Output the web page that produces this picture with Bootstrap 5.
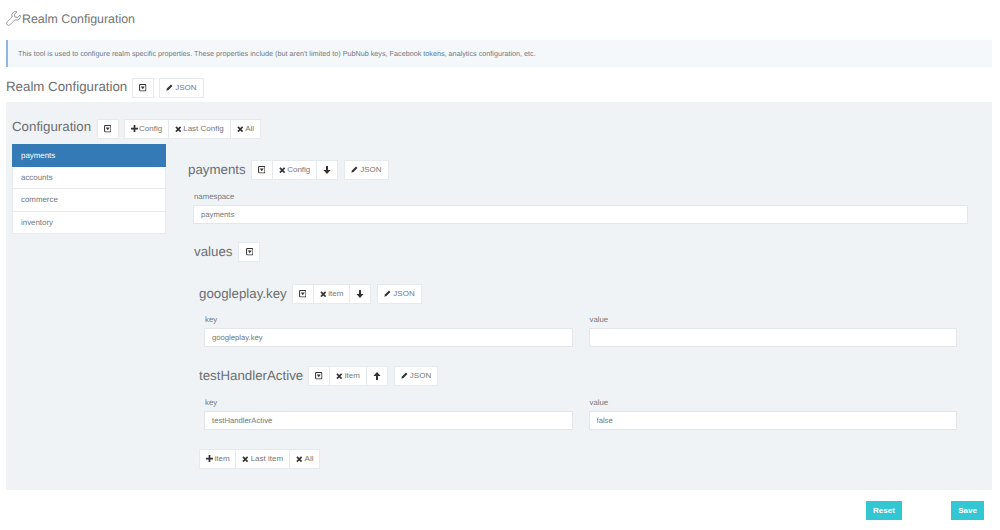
<!DOCTYPE html>
<html lang="en">
<head>
<meta charset="utf-8">
<title>Realm Configuration</title>
<link href="https://cdn.jsdelivr.net/npm/bootstrap@5.3.0/dist/css/bootstrap.min.css" rel="stylesheet">
<style>
html,body{height:530px;overflow:hidden;background:#fff}
body{font-family:"Liberation Sans",Arial,sans-serif;font-size:8px;color:#676a6c;padding:0 8px 0 6px;text-rendering:geometricPrecision}
.page-title{font-size:12.4px;font-weight:400;color:#707375;margin:0;height:40px;padding-bottom:3px;line-height:16px;display:flex;align-items:center;gap:1px}
.page-title svg{width:15px;height:15px}
.info-box{background:#f4f8fb;border-left:2px solid #8db7e3;height:27px;padding:0 10px;line-height:27px;font-size:7.23px;color:#74797e;border-radius:0}
.info-box a{color:#4f7fa8;text-decoration:none}
.head-row{display:flex;align-items:center;gap:5px}
.head-row.top{height:35px;padding-top:11px;align-items:flex-start}
.htext{font-weight:400;color:#6c6f71;margin:0;line-height:19.5px}
.h-lg{font-size:13.3px;line-height:17px}
.h-cfg{font-size:13.3px;line-height:14px;margin:0 .5px 3px 0}
.h-md{font-size:13.3px}
.h-sm{font-size:13.3px}
.tool-btn{--bs-btn-padding-x:6px;--bs-btn-padding-y:0;--bs-btn-font-size:8px;--bs-btn-color:#75787a;--bs-btn-bg:#fff;--bs-btn-border-color:#e7eaec;--bs-btn-hover-color:#75787a;--bs-btn-hover-bg:#fff;--bs-btn-hover-border-color:#e7eaec;--bs-btn-border-radius:0;height:19.5px;line-height:17px;display:inline-flex;align-items:center;justify-content:center;gap:2px;white-space:nowrap}
.tool-btn svg{flex:none}
.icon-only{width:22px;padding:0}
.plus-btn{gap:1.5px;padding-right:5.5px}
.btn-group .tool-btn{border-radius:0}
.json-btn{margin-left:1px}
.main-panel{background:#eff3f6;height:388px;padding:17px 6px 0 6px}
.cfg-layout{display:flex;margin-top:5.5px}
.side-col{width:154px;flex:none}
.side-list{--bs-list-group-border-radius:0;--bs-list-group-border-color:#e7eaec;--bs-list-group-color:#75787a;--bs-list-group-active-bg:#337ab7;--bs-list-group-active-border-color:#337ab7;--bs-list-group-active-color:#fff;--bs-list-group-item-padding-x:8px;--bs-list-group-item-padding-y:0}
.side-list .list-group-item{font-size:7.9px;height:22.3px;line-height:21px}
.side-list .active{height:23px}
.detail-col{flex:1;padding-left:22px;padding-top:16px;min-width:0}
.fld-label{display:block;font-size:7.8px;line-height:9px;margin:0 0 4px 1px;color:#75787a}
.fld-input{display:block;width:100%;height:19px;padding:0 7px;font-size:7.7px;color:#75787a;background:#fff;border:1px solid #e5e6e7;border-radius:0;box-shadow:none;line-height:17px;text-rendering:geometricPrecision}
.ns-block{padding:12.5px 18px 0 5px}
.vals-block{padding:18px 0 0 6px;gap:6px}
.item-area{padding:22.5px 29px 0 11px}
.kv-grid{display:grid;grid-template-columns:1fr 1fr;gap:16px;padding:11.5px 0 0 5px}
.kv-next{padding-top:12.5px}
.item-gap{height:19px}
.add-row{margin-top:19px}
.foot-row{display:flex;justify-content:flex-end;padding:11px 8px 0 0}
.act-btn{--bs-btn-padding-x:0;--bs-btn-padding-y:0;--bs-btn-font-size:8px;--bs-btn-font-weight:700;--bs-btn-color:#fff;--bs-btn-bg:#33c7d3;--bs-btn-border-color:#33c7d3;--bs-btn-hover-color:#fff;--bs-btn-hover-bg:#33c7d3;--bs-btn-hover-border-color:#33c7d3;--bs-btn-border-radius:0;height:19px;line-height:17px}
.act-reset{width:36px;margin-right:49px}
.act-save{width:33px}
</style>
</head>
<body>
<svg width="0" height="0" class="d-block" aria-hidden="true">
<defs>
<symbol id="i-collapse" viewBox="0 0 8 8"><rect x=".6" y=".6" width="6.800" height="6.800" rx="1" fill="none" stroke="#333" stroke-width="1.100"/><path fill="#333" d="M1.900 2.700h4.200L4 5.700z"/></symbol>
<symbol id="i-plus" viewBox="0 0 8 8"><path fill="#333" d="M3 0h2v3h3v2H5v3H3V5H0V3h3z"/></symbol>
<symbol id="i-x" viewBox="0 0 8 8"><path fill="#333" d="M1.800.4 4 2.600 6.200.4l1.400 1.400L5.400 4l2.200 2.200-1.400 1.400L4 5.400 1.800 7.600.4 6.200 2.600 4 .4 1.800z"/></symbol>
<symbol id="i-down" viewBox="0 0 8 8"><path fill="#333" d="M3 0h2v4h2.600L4 8 .4 4H3z"/></symbol>
<symbol id="i-up" viewBox="0 0 8 8"><path fill="#333" d="M3 8h2V4h2.600L4 0 .4 4H3z"/></symbol>
<symbol id="i-pen" viewBox="0 0 8 8"><path fill="#333" d="M5.700.6 7.400 2.300 2.800 6.900.4 7.600l.7-2.400z"/></symbol>
</defs>
</svg>

<h1 class="page-title">
<svg viewBox="0 0 16 16" fill="none" stroke="#85888a" stroke-width=".9" stroke-linejoin="round"><path d="M15 4.200 12.300 6.900 9.400 6.300 8.900 3.500 11.700.9A4 4 0 0 0 6.600 6.400L1.200 11.700a2.100 2.100 0 0 0 3 3L9.600 9.400A4 4 0 0 0 15 4.200z"/></svg>
Realm Configuration</h1>

<div class="info-box">This tool is used to <a href="#">configure</a> realm specific properties. These properties include (but aren't limited to) PubNub keys, Facebook <a href="#">tokens</a>, analytics configuration, etc.</div>

<div class="head-row top">
<h2 class="htext h-lg">Realm Configuration</h2>
<button class="btn tool-btn icon-only" type="button"><svg width="7.500" height="7.500"><use href="#i-collapse"/></svg></button>
<button class="btn tool-btn" type="button"><svg width="7" height="7"><use href="#i-pen"/></svg>JSON</button>
</div>

<div class="main-panel">
<div class="head-row">
<h3 class="htext h-cfg">Configuration</h3>
<button class="btn tool-btn icon-only" type="button"><svg width="7.500" height="7.500"><use href="#i-collapse"/></svg></button>
<div class="btn-group">
<button class="btn tool-btn plus-btn" type="button"><svg width="7" height="7"><use href="#i-plus"/></svg>Config</button>
<button class="btn tool-btn" type="button"><svg width="6.500" height="6.500"><use href="#i-x"/></svg>Last Config</button>
<button class="btn tool-btn" type="button"><svg width="6.500" height="6.500"><use href="#i-x"/></svg>All</button>
</div>
</div>

<div class="cfg-layout">
<div class="side-col">
<div class="list-group side-list">
<a href="#" class="list-group-item list-group-item-action active">payments</a>
<a href="#" class="list-group-item list-group-item-action">accounts</a>
<a href="#" class="list-group-item list-group-item-action">commerce</a>
<a href="#" class="list-group-item list-group-item-action">inventory</a>
</div>
</div>

<div class="detail-col">
<div class="head-row">
<h4 class="htext h-md">payments</h4>
<div class="btn-group">
<button class="btn tool-btn icon-only" type="button"><svg width="7.500" height="7.500"><use href="#i-collapse"/></svg></button>
<button class="btn tool-btn" type="button"><svg width="6.500" height="6.500"><use href="#i-x"/></svg>Config</button>
<button class="btn tool-btn icon-only" type="button"><svg width="8" height="8"><use href="#i-down"/></svg></button>
</div>
<button class="btn tool-btn json-btn" type="button"><svg width="7" height="7"><use href="#i-pen"/></svg>JSON</button>
</div>

<div class="ns-block">
<label class="fld-label">namespace</label>
<input class="fld-input" type="text" value="payments">
</div>

<div class="vals-block head-row">
<h4 class="htext h-md">values</h4>
<button class="btn tool-btn icon-only" type="button"><svg width="7.500" height="7.500"><use href="#i-collapse"/></svg></button>
</div>

<div class="item-area">
<div class="head-row">
<h5 class="htext h-sm">googleplay.key</h5>
<div class="btn-group">
<button class="btn tool-btn icon-only" type="button"><svg width="7.500" height="7.500"><use href="#i-collapse"/></svg></button>
<button class="btn tool-btn" type="button"><svg width="6.500" height="6.500"><use href="#i-x"/></svg>item</button>
<button class="btn tool-btn icon-only" type="button"><svg width="8" height="8"><use href="#i-down"/></svg></button>
</div>
<button class="btn tool-btn json-btn" type="button"><svg width="7" height="7"><use href="#i-pen"/></svg>JSON</button>
</div>
<div class="kv-grid">
<div><label class="fld-label">key</label><input class="fld-input" type="text" value="googleplay.key"></div>
<div><label class="fld-label">value</label><input class="fld-input" type="text" value=""></div>
</div>
<div class="item-gap"></div>
<div class="head-row">
<h5 class="htext h-sm">testHandlerActive</h5>
<div class="btn-group">
<button class="btn tool-btn icon-only" type="button"><svg width="7.500" height="7.500"><use href="#i-collapse"/></svg></button>
<button class="btn tool-btn" type="button"><svg width="6.500" height="6.500"><use href="#i-x"/></svg>item</button>
<button class="btn tool-btn icon-only" type="button"><svg width="8" height="8"><use href="#i-up"/></svg></button>
</div>
<button class="btn tool-btn json-btn" type="button"><svg width="7" height="7"><use href="#i-pen"/></svg>JSON</button>
</div>
<div class="kv-grid kv-next">
<div><label class="fld-label">key</label><input class="fld-input" type="text" value="testHandlerActive"></div>
<div><label class="fld-label">value</label><input class="fld-input" type="text" value="false"></div>
</div>
<div class="btn-group add-row">
<button class="btn tool-btn plus-btn" type="button"><svg width="7" height="7"><use href="#i-plus"/></svg>item</button>
<button class="btn tool-btn" type="button"><svg width="6.500" height="6.500"><use href="#i-x"/></svg>Last item</button>
<button class="btn tool-btn" type="button"><svg width="6.500" height="6.500"><use href="#i-x"/></svg>All</button>
</div>
</div>
</div>
</div>
</div>

<div class="foot-row">
<button class="btn act-btn act-reset" type="button">Reset</button>
<button class="btn act-btn act-save" type="button">Save</button>
</div>
<script src="https://cdn.jsdelivr.net/npm/bootstrap@5.3.0/dist/js/bootstrap.bundle.min.js"></script>
</body>
</html>
